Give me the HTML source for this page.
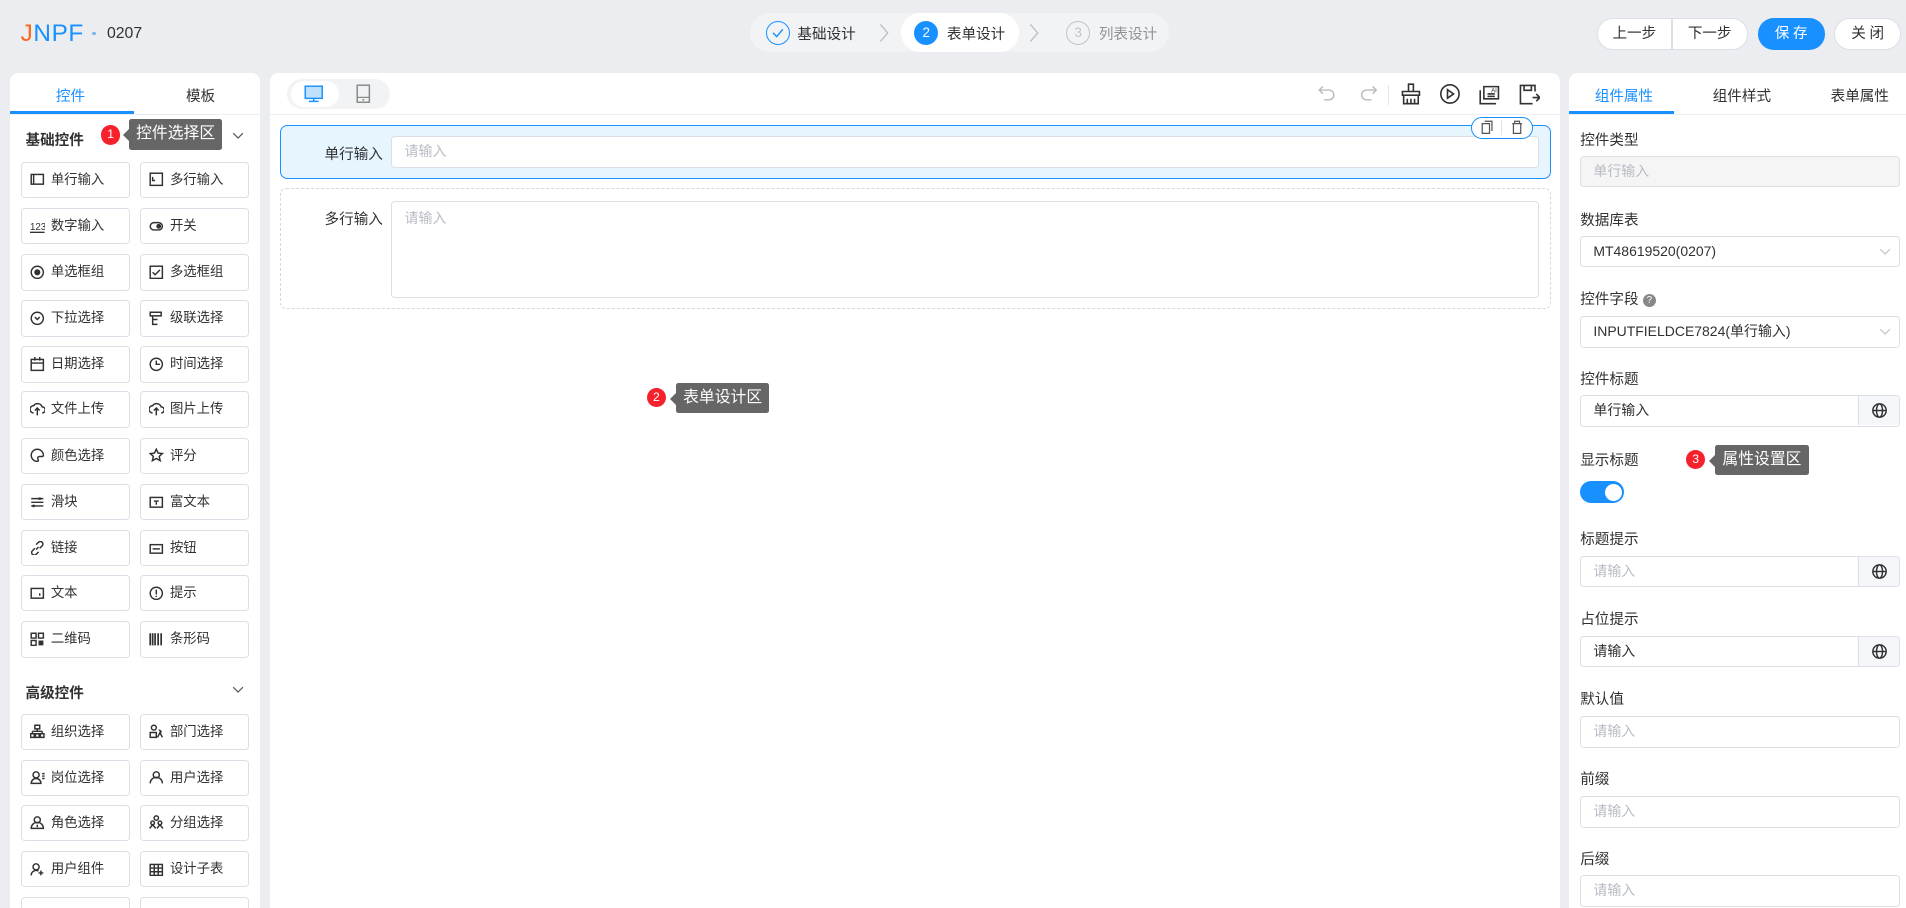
<!DOCTYPE html>
<html><head><meta charset="utf-8">
<style>
*{box-sizing:border-box;margin:0;padding:0}
html,body{width:1906px;height:908px;overflow:hidden;background:#ebedf0}
#w{zoom:1.21556;width:1568px;height:747px;position:relative;font-family:"Liberation Sans","Noto Sans CJK SC",sans-serif;font-size:12px;color:#303133;background:#ebedf0}
.a{position:absolute}
.panel{background:#fff;border-radius:7px}
.item{position:absolute;width:90px;height:30px;border:1px solid #dcdfe6;border-radius:3px;background:#fff;font-size:11px;line-height:28px;padding-left:24px;color:#303133}
.item svg{position:absolute;left:7px;top:8px}
.lbl{position:absolute;left:1300px;font-size:12px;color:#303133}
.inp{position:absolute;left:1300px;width:263px;height:26px;border:1px solid #dcdfe6;border-radius:3px;background:#fff;padding-left:10px;line-height:24px;font-size:11.5px;color:#303133}
.ph{color:#b8bcc4}
.add{position:absolute;right:0;top:0;width:34px;height:24px;border-left:1px solid #dcdfe6;background:#f5f7fa;border-radius:0 3px 3px 0}
.add svg{position:absolute;left:10px;top:5px}
.tip{position:absolute;background:#666;color:#fff;font-size:13px;border-radius:2px;padding:0 6px;line-height:25px}
.tip:before{content:"";position:absolute;left:-5px;top:8px;border:5px solid transparent;border-left:0;border-right-color:#666}
.badge{position:absolute;width:16px;height:16px;border-radius:50%;background:#f5222d;color:#fff;font-size:10px;text-align:center;line-height:16px}
.ic{stroke:#303133;fill:none;stroke-width:1.2}
.btn{position:absolute;top:15px;height:26px;line-height:27px;text-align:center}
</style></head><body><div id="w">
<!-- header -->
<div class="a" style="left:17px;top:17px;font-size:20px;letter-spacing:0.5px;line-height:22px"><span style="color:#f7681d">J</span><span style="color:#1890ff">NPF</span></div>
<div class="a" style="left:76px;top:26px;width:3px;height:3px;border-radius:50%;background:#7fb2e8"></div>
<div class="a" style="left:88px;top:20px;font-size:13px;line-height:16px">0207</div>

<div class="a" style="left:617px;top:11px;width:345px;height:32px;border-radius:16px;background:#f2f3f5"></div>
<div class="a" style="left:741px;top:11px;width:97px;height:32px;border-radius:16px;background:#fff"></div>
<div class="a" style="left:630px;top:17px;width:20px;height:20px;border-radius:50%;border:1px solid #1890ff"><svg width="18" height="18" viewBox="0 0 18 18" style="position:absolute;left:0;top:0"><path d="M5 9l3 3 5-6" stroke="#1890ff" fill="none" stroke-width="1.2"/></svg></div>
<div class="a" style="left:656px;top:19px;font-size:12px">基础设计</div>
<svg class="a" style="left:722px;top:18px" width="10" height="18"><path d="M2 2l6 7-6 7" stroke="#bbb" fill="none"/></svg>
<div class="a" style="left:752px;top:17px;width:20px;height:20px;border-radius:50%;background:#1890ff;color:#fff;text-align:center;line-height:20px;font-size:11px">2</div>
<div class="a" style="left:779px;top:19px;font-size:12px">表单设计</div>
<svg class="a" style="left:846px;top:18px" width="10" height="18"><path d="M2 2l6 7-6 7" stroke="#bbb" fill="none"/></svg>
<div class="a" style="left:877px;top:17px;width:20px;height:20px;border-radius:50%;border:1px solid #c0c4cc;color:#c0c4cc;text-align:center;line-height:18px;font-size:11px">3</div>
<div class="a" style="left:904px;top:19px;font-size:12px;color:#909399">列表设计</div>

<div class="a" style="left:1314px;top:15px;width:124px;height:26px;border:1px solid #dcdfe6;border-radius:13px;background:#fff"></div>
<div class="a" style="left:1375px;top:16px;width:1px;height:24px;background:#dcdfe6"></div>
<div class="btn" style="left:1314px;width:61px">上一步</div>
<div class="btn" style="left:1376px;width:61px">下一步</div>
<div class="btn" style="left:1446px;width:55px;border-radius:13px;background:#1890ff;color:#fff;letter-spacing:3px;text-indent:3px">保存</div>
<div class="btn" style="left:1509px;width:55px;border-radius:13px;border:1px solid #dcdfe6;background:#fff;line-height:25px;letter-spacing:3px;text-indent:3px">关闭</div>

<!-- left panel -->
<div class="a panel" style="left:8px;top:60px;width:206px;height:700px"></div>
<div class="a" style="left:8px;top:94px;width:206px;height:1px;background:#ebeef5"></div>
<div class="a" style="left:8px;top:91px;width:102px;height:3px;background:#1890ff"></div>
<div class="a" style="left:46px;top:70px;color:#1890ff">控件</div>
<div class="a" style="left:153px;top:70px">模板</div>
<div class="a" style="left:21px;top:106px;font-weight:bold;font-size:12px">基础控件</div>
<svg class="a" style="left:191px;top:109px" width="10" height="8"><path d="M1 1l4 4 4-4" stroke="#555" fill="none"/></svg>
<div class="a" style="left:21px;top:561px;font-weight:bold;font-size:12px">高级控件</div>
<svg class="a" style="left:191px;top:564px" width="10" height="8"><path d="M1 1l4 4 4-4" stroke="#555" fill="none"/></svg>

<div class="item" style="left:17px;top:133px"><svg width="12" height="12"><rect class="ic" x="1" y="2" width="10" height="8"/><path class="ic" d="M3 2v8"/></svg>单行输入</div>
<div class="item" style="left:115px;top:133px"><svg width="12" height="12"><rect class="ic" x="1" y="1" width="10" height="10"/><path class="ic" d="M3 4v3h2"/></svg>多行输入</div>
<div class="item" style="left:17px;top:171px"><svg width="12" height="12"><text x="0" y="9" font-size="8" fill="#303133">123</text><path class="ic" d="M0 11h12"/></svg>数字输入</div>
<div class="item" style="left:115px;top:171px"><svg width="12" height="12"><rect class="ic" x="1" y="3" width="10" height="6" rx="3"/><circle cx="8" cy="6" r="2" fill="#303133"/></svg>开关</div>
<div class="item" style="left:17px;top:209px"><svg width="12" height="12"><circle class="ic" cx="6" cy="6" r="5"/><circle cx="6" cy="6" r="2.5" fill="#303133"/></svg>单选框组</div>
<div class="item" style="left:115px;top:209px"><svg width="12" height="12"><rect class="ic" x="1" y="1" width="10" height="10"/><path class="ic" d="M3 6l2 2 4-4"/></svg>多选框组</div>
<div class="item" style="left:17px;top:247px"><svg width="12" height="12"><circle class="ic" cx="6" cy="6" r="5"/><path class="ic" d="M4 5l2 2 2-2"/></svg>下拉选择</div>
<div class="item" style="left:115px;top:247px"><svg width="12" height="12"><path class="ic" d="M1 1h9v3H1zM3 4v7h4M3 7h4"/></svg>级联选择</div>
<div class="item" style="left:17px;top:285px"><svg width="12" height="12"><rect class="ic" x="1" y="2" width="10" height="9"/><path class="ic" d="M1 5h10M4 0v3M8 0v3"/></svg>日期选择</div>
<div class="item" style="left:115px;top:285px"><svg width="12" height="12"><circle class="ic" cx="6" cy="6" r="5"/><path class="ic" d="M6 3v3h3"/></svg>时间选择</div>
<div class="item" style="left:17px;top:322px"><svg width="12" height="12"><path class="ic" d="M3 9a3 3 0 010-6 4 4 0 017 1 2.5 2.5 0 010 5M6 11V5M4 7l2-2 2 2"/></svg>文件上传</div>
<div class="item" style="left:115px;top:322px"><svg width="12" height="12"><path class="ic" d="M3 9a3 3 0 010-6 4 4 0 017 1 2.5 2.5 0 010 5M6 11V5M4 7l2-2 2 2"/></svg>图片上传</div>
<div class="item" style="left:17px;top:360px"><svg width="12" height="12"><path class="ic" d="M6 1a5 5 0 100 10c1 0 1-1 .5-2s0-2 1.5-2H10a1 1 0 001-1A5 5 0 006 1z"/></svg>颜色选择</div>
<div class="item" style="left:115px;top:360px"><svg width="12" height="12"><path class="ic" d="M6 1l1.5 3.2 3.5.4-2.6 2.3.8 3.5L6 8.6 2.8 10.4l.8-3.5L1 4.6l3.5-.4z"/></svg>评分</div>
<div class="item" style="left:17px;top:398px"><svg width="12" height="12"><path class="ic" d="M1 3h10M1 6h10M1 9h10"/><rect x="7" y="2" width="2" height="2" fill="#303133"/><rect x="2" y="8" width="2" height="2" fill="#303133"/></svg>滑块</div>
<div class="item" style="left:115px;top:398px"><svg width="12" height="12"><rect class="ic" x="1" y="2" width="10" height="8"/><path class="ic" d="M4 5h4M6 5v3"/></svg>富文本</div>
<div class="item" style="left:17px;top:436px"><svg width="12" height="12"><path class="ic" d="M5 7l2-2M4 6L2 8a2 2 0 003 3l2-2M8 6l2-2a2 2 0 00-3-3L5 3"/></svg>链接</div>
<div class="item" style="left:115px;top:436px"><svg width="12" height="12"><rect class="ic" x="1" y="3" width="10" height="7"/><path class="ic" d="M3 6.5h6"/></svg>按钮</div>
<div class="item" style="left:17px;top:473px"><svg width="12" height="12"><rect class="ic" x="1" y="2" width="10" height="8"/><path class="ic" d="M8 6v2"/></svg>文本</div>
<div class="item" style="left:115px;top:473px"><svg width="12" height="12"><circle class="ic" cx="6" cy="6" r="5"/><path class="ic" d="M6 3v4M6 8v1"/></svg>提示</div>
<div class="item" style="left:17px;top:511px"><svg width="12" height="12"><path class="ic" d="M1 1h4v4H1zM7 1h4v4H7zM1 7h4v4H1z"/><rect x="7" y="7" width="4" height="4" fill="#303133"/></svg>二维码</div>
<div class="item" style="left:115px;top:511px"><svg width="12" height="12"><path d="M1 1v10M3 1v10M5 1v10M7.5 1v10M10 1v10" stroke="#303133" stroke-width="1.4"/></svg>条形码</div>

<div class="item" style="left:17px;top:587px"><svg width="12" height="12"><path class="ic" d="M4 1h4v3H4zM6 4v2M2 6h8M2 6v2M10 6v2M0.5 8h3v3h-3zM8.5 8h3v3h-3zM4.5 8h3v3h-3z"/></svg>组织选择</div>
<div class="item" style="left:115px;top:587px"><svg width="12" height="12"><circle class="ic" cx="4" cy="3" r="2"/><path class="ic" d="M1 7h5v4H1zM8 5a2 2 0 012 2M7 11l2-4 2 4"/></svg>部门选择</div>
<div class="item" style="left:17px;top:625px"><svg width="12" height="12"><circle class="ic" cx="5" cy="4" r="2.5"/><path class="ic" d="M1 11a4 4 0 018 0zM10 3h2M10 5h2M10 7h2"/></svg>岗位选择</div>
<div class="item" style="left:115px;top:625px"><svg width="12" height="12"><circle class="ic" cx="6" cy="4" r="2.5"/><path class="ic" d="M1 11a5 5 0 0110 0"/></svg>用户选择</div>
<div class="item" style="left:17px;top:662px"><svg width="12" height="12"><circle class="ic" cx="6" cy="4" r="2.5"/><path class="ic" d="M1 11a5 5 0 0110 0zM6 8v2"/></svg>角色选择</div>
<div class="item" style="left:115px;top:662px"><svg width="12" height="12"><circle class="ic" cx="6" cy="2.5" r="1.8"/><circle class="ic" cx="3" cy="6.5" r="1.5"/><circle class="ic" cx="9" cy="6.5" r="1.5"/><path class="ic" d="M0.5 11l2.5-3 2.5 3M6.5 11l2.5-3 2.5 3"/></svg>分组选择</div>
<div class="item" style="left:17px;top:700px"><svg width="12" height="12"><circle class="ic" cx="5" cy="4" r="2.5"/><path class="ic" d="M1 11a4 4 0 016-3.5M9 7v4M7 9h4"/></svg>用户组件</div>
<div class="item" style="left:115px;top:700px"><svg width="12" height="12"><rect class="ic" x="1" y="2" width="10" height="9"/><path class="ic" d="M1 5h10M1 8h10M4.3 2v9M7.6 2v9"/></svg>设计子表</div>
<div class="item" style="left:17px;top:738px"></div>
<div class="item" style="left:115px;top:738px"></div>

<div class="badge" style="left:83px;top:103px">1</div>
<div class="tip" style="left:106px;top:98px">控件选择区</div>

<!-- center -->
<div class="a panel" style="left:222px;top:60px;width:1061px;height:700px"></div>
<div class="a" style="left:222px;top:94px;width:1061px;height:1px;background:#ebeef5"></div>
<div class="a" style="left:236px;top:65px;width:85px;height:25px;border-radius:13px;background:#f2f3f5"></div>
<div class="a" style="left:239px;top:67px;width:40px;height:21px;border-radius:11px;background:#fff"></div>
<svg class="a" style="left:250px;top:70px" width="16" height="15"><rect x="1" y="1" width="14" height="10" stroke="#1890ff" fill="#bfe0ff" stroke-width="1.2"/><path d="M4 13.5h8M8 11v2" stroke="#1890ff" stroke-width="1.2"/></svg>
<svg class="a" style="left:293px;top:69px" width="12" height="16"><rect x="1" y="1" width="10" height="14" stroke="#888" fill="none" stroke-width="1.2"/><path d="M1 11h10" stroke="#888"/><circle cx="6" cy="13" r=".8" fill="#888"/></svg>
<svg class="a" style="left:1084px;top:69px" width="16" height="14"><path d="M4 2L1 5l3 3M1 5h8a4 4 0 010 8H5" stroke="#bbb" fill="none" stroke-width="1.2"/></svg>
<svg class="a" style="left:1117px;top:69px" width="16" height="14"><path d="M12 2l3 3-3 3M15 5H7a4 4 0 000 8h4" stroke="#bbb" fill="none" stroke-width="1.2"/></svg>
<div class="a" style="left:1142px;top:70px;width:1px;height:16px;background:#e4e4e4"></div>
<svg class="a" style="left:1152px;top:68px" width="18" height="18"><path d="M7 1h4v6H7zM2 7h14v3H2zM3 10v7h12v-7M6 13v4M9 13v4M12 13v4" stroke="#303133" fill="none" stroke-width="1.3"/></svg>
<svg class="a" style="left:1184px;top:68px" width="18" height="18"><circle cx="9" cy="9" r="7.5" stroke="#303133" fill="none" stroke-width="1.3"/><path d="M7 5.5v7l5-3.5z" stroke="#303133" fill="none" stroke-width="1.3"/></svg>
<svg class="a" style="left:1217px;top:68px" width="18" height="18"><path d="M4 3h12v10H4zM1 6v11h13M7 9h6M7 11h6" stroke="#303133" fill="none" stroke-width="1.3"/><text x="10" y="8" font-size="5" fill="#303133">AI</text></svg>
<svg class="a" style="left:1249px;top:68px" width="18" height="18"><path d="M14 7V2H2v15h10M5 2v4h6V2M12 12h6M15 9l3 3-3 3" stroke="#303133" fill="none" stroke-width="1.3"/></svg>

<div class="a" style="left:230px;top:103px;width:1046px;height:44px;border:1px solid #1890ff;border-radius:6px;background:#e6f5fe"></div>
<div class="a" style="left:267px;top:118px">单行输入</div>
<div class="a" style="left:322px;top:112px;width:944px;height:26px;border:1px solid #dcdfe6;border-radius:3px;background:#fff;padding-left:10px;line-height:24px;color:#b8bcc4;font-size:11.5px">请输入</div>
<div class="a" style="left:1210px;top:96px;width:51px;height:18px;border:1px solid #1890ff;border-radius:9px;background:#fff"></div>
<div class="a" style="left:1235px;top:99px;width:1px;height:12px;background:#e4e4e4"></div>
<svg class="a" style="left:1218px;top:99px" width="10" height="12"><path d="M3 1h6v8M1 3h6v8H1z" stroke="#555" fill="none"/></svg>
<svg class="a" style="left:1243px;top:99px" width="10" height="12"><path d="M1 3h8M3 3V1h4v2M2 3v8h6V3" stroke="#555" fill="none"/></svg>

<div class="a" style="left:230px;top:155px;width:1046px;height:99px;border:1px dashed #d4d7de;border-radius:5px"></div>
<div class="a" style="left:267px;top:171px">多行输入</div>
<div class="a" style="left:322px;top:165px;width:944px;height:80px;border:1px solid #dcdfe6;border-radius:3px;background:#fff;padding:5px 10px;color:#b8bcc4;font-size:11.5px">请输入</div>

<div class="badge" style="left:532px;top:319px">2</div>
<div class="tip" style="left:556px;top:315px">表单设计区</div>

<!-- right -->
<div class="a panel" style="left:1291px;top:60px;width:290px;height:700px"></div>
<div class="a" style="left:1291px;top:94px;width:290px;height:1px;background:#ebeef5"></div>
<div class="a" style="left:1291px;top:91px;width:86px;height:3px;background:#1890ff"></div>
<div class="a" style="left:1312px;top:70px;color:#1890ff">组件属性</div>
<div class="a" style="left:1409px;top:70px">组件样式</div>
<div class="a" style="left:1506px;top:70px">表单属性</div>

<div class="lbl" style="top:106px">控件类型</div>
<div class="inp" style="top:128px;background:#f5f5f5;color:#b8bcc4">单行输入</div>
<div class="lbl" style="top:172px">数据库表</div>
<div class="inp" style="top:194px">MT48619520(0207)<svg style="position:absolute;right:6px;top:9px" width="10" height="7"><path d="M1 1l4 4 4-4" stroke="#c0c4cc" fill="none"/></svg></div>
<div class="lbl" style="top:237px">控件字段 <span style="display:inline-block;width:11px;height:11px;border-radius:50%;background:#888;color:#fff;font-size:8px;text-align:center;line-height:11px;vertical-align:1px">?</span></div>
<div class="inp" style="top:260px">INPUTFIELDCE7824(单行输入)<svg style="position:absolute;right:6px;top:9px" width="10" height="7"><path d="M1 1l4 4 4-4" stroke="#c0c4cc" fill="none"/></svg></div>
<div class="lbl" style="top:303px">控件标题</div>
<div class="inp" style="top:325px">单行输入<div class="add"><svg width="14" height="14"><circle cx="7" cy="7" r="5.5" stroke="#303133" fill="none" stroke-width="1.2"/><ellipse cx="7" cy="7" rx="2.5" ry="5.5" stroke="#303133" fill="none" stroke-width="1.2"/><path d="M1.5 7h11" stroke="#303133" stroke-width="1.2"/></svg></div></div>
<div class="lbl" style="top:369px">显示标题</div>
<div class="a" style="left:1300px;top:396px;width:36px;height:18px;border-radius:9px;background:#1890ff"><div style="position:absolute;right:2px;top:2px;width:14px;height:14px;border-radius:50%;background:#fff"></div></div>
<div class="lbl" style="top:434px">标题提示</div>
<div class="inp ph" style="top:457px">请输入<div class="add"><svg width="14" height="14"><circle cx="7" cy="7" r="5.5" stroke="#303133" fill="none" stroke-width="1.2"/><ellipse cx="7" cy="7" rx="2.5" ry="5.5" stroke="#303133" fill="none" stroke-width="1.2"/><path d="M1.5 7h11" stroke="#303133" stroke-width="1.2"/></svg></div></div>
<div class="lbl" style="top:500px">占位提示</div>
<div class="inp" style="top:523px">请输入<div class="add"><svg width="14" height="14"><circle cx="7" cy="7" r="5.5" stroke="#303133" fill="none" stroke-width="1.2"/><ellipse cx="7" cy="7" rx="2.5" ry="5.5" stroke="#303133" fill="none" stroke-width="1.2"/><path d="M1.5 7h11" stroke="#303133" stroke-width="1.2"/></svg></div></div>
<div class="lbl" style="top:566px">默认值</div>
<div class="inp ph" style="top:589px">请输入</div>
<div class="lbl" style="top:632px">前缀</div>
<div class="inp ph" style="top:655px">请输入</div>
<div class="lbl" style="top:698px">后缀</div>
<div class="inp ph" style="top:720px">请输入</div>

<div class="badge" style="left:1387px;top:370px">3</div>
<div class="tip" style="left:1411px;top:366px">属性设置区</div>
</div></body></html>
